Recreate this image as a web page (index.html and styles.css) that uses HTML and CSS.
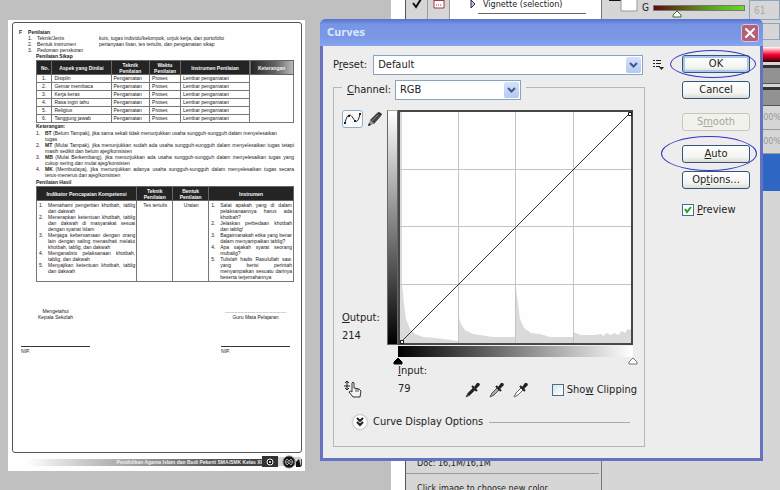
FILE: index.html
```html
<!DOCTYPE html>
<html lang="en">
<head>
<meta charset="utf-8">
<title>Curves</title>
<link rel="stylesheet" href="styles.css">
</head>
<body>
<div class="workspace">
  <main class="canvas">
    <article class="paper" lang="id">
      <div class="sheet">
        <h2 class="sheet-title"><span>F</span><span>Penilaian</span></h2>
        <dl class="facts">
          <dt>1.</dt><dd>Teknik/Jenis</dd><dd>kuis, tugas individu/kelompok, unjuk kerja, dan portofolio</dd>
          <dt>2.</dt><dd>Bentuk instrumen</dd><dd>pertanyaan lisan, tes tertulis, dan pengamatan sikap</dd>
          <dt>3.</dt><dd>Pedoman penskoran</dd><dd></dd>
        </dl>
        <div class="content">
          <h3>Penilaian Sikap</h3>
          <table class="attitude">
            <colgroup><col class="a1"><col class="a2"><col class="a3"><col class="a4"><col class="a5"><col class="a6"></colgroup>
            <thead><tr><th>No.</th><th>Aspek yang Dinilai</th><th>Teknik Penilaian</th><th>Waktu Penilaian</th><th>Instrumen Penilaian</th><th class="faded">Keterangan</th></tr></thead>
            <tbody>
              <tr><td>1.</td><td>Disiplin</td><td>Pengamatan</td><td>Proses</td><td>Lembar pengamatan</td><td></td></tr>
              <tr><td>2.</td><td>Gemar membaca</td><td>Pengamatan</td><td>Proses</td><td>Lembar pengamatan</td><td></td></tr>
              <tr><td>3.</td><td>Kerja keras</td><td>Pengamatan</td><td>Proses</td><td>Lembar pengamatan</td><td></td></tr>
              <tr><td>4.</td><td>Rasa ingin tahu</td><td>Pengamatan</td><td>Proses</td><td>Lembar pengamatan</td><td></td></tr>
              <tr><td>5.</td><td>Religius</td><td>Pengamatan</td><td>Proses</td><td>Lembar pengamatan</td><td></td></tr>
              <tr><td>6.</td><td>Tanggung jawab</td><td>Pengamatan</td><td>Proses</td><td>Lembar pengamatan</td><td></td></tr>
            </tbody>
          </table>
          <h3>Keterangan:</h3>
          <ol class="notes">
            <li><span><b>BT</b> (Belum Tampak), jika sama sekali tidak menunjukkan usaha sungguh-sungguh dalam menyelesaikan<br>tugas</span></li>
            <li><span><b>MT</b> (Mulai Tampak), jika menunjukkan sudah ada usaha sungguh-sungguh dalam menyelesaikan tugas tetapi masih sedikit dan belum ajeg/konsisten</span></li>
            <li><span><b>MB</b> (Mulai Berkembang), jika menunjukkan ada usaha sungguh-sungguh dalam menyelesaikan tugas yang cukup sering dan mulai ajeg/konsisten</span></li>
            <li><span><b>MK</b> (Membudaya), jika menunjukkan adanya usaha sungguh-sungguh dalam menyelesaikan tugas secara terus-menerus dan ajeg/konsisten</span></li>
          </ol>
          <h3>Penilaian Hasil</h3>
          <table class="results">
            <colgroup><col class="r1"><col class="r2"><col class="r3"><col class="r4"></colgroup>
            <thead><tr><th>Indikator Pencapaian Kompetensi</th><th>Teknik Penilaian</th><th>Bentuk Penilaian</th><th>Instrumen</th></tr></thead>
            <tbody><tr>
              <td><ol>
                <li>Memahami pengertian khotbah, tablig dan dakwah</li>
                <li>Menerapkan ketentuan khotbah, tablig dan dakwah di masyarakat sesuai dengan syariat Islam</li>
                <li>Menjaga kebersamaan dengan orang lain dengan saling menasihati melalui khotbah, tablig, dan dakwah</li>
                <li>Menganalisis pelaksanaan khotbah, tablig, dan dakwah</li>
                <li>Menyajikan ketentuan khotbah, tablig dan dakwah</li>
              </ol></td>
              <td class="mid">Tes tertulis</td>
              <td class="mid">Uraian</td>
              <td><ol>
                <li>Salat apakah yang di dalam pelaksanaannya harus ada khotbah?</li>
                <li>Jelaskan perbedaan khotbah dan tablig!</li>
                <li>Bagaimanakah etika yang benar dalam menyampaikan tablig?</li>
                <li>Apa sajakah syarat seorang mubalig?</li>
                <li>Tulislah hadis Rasulullah saw. yang berisi perintah menyampaikan sesuatu darinya beserta terjemahannya</li>
              </ol></td>
            </tr></tbody>
          </table>
        </div>
        <div class="signatures">
          <div class="signer"><p>Mengetahui<br>Kepala Sekolah</p><p class="nip">NIP.</p></div>
          <div class="signer"><p>............................................<br>Guru Mata Pelajaran</p><p class="nip">NIP.</p></div>
        </div>
      </div>
      <footer class="strip">
        <span>Pendidikan Agama Islam dan Budi Pekerti SMA/SMK Kelas XI</span>
        <svg width="40" height="14" viewBox="0 0 40 14" aria-hidden="true">
          <path d="M0 1h16v11H0z" fill="#333"/><path d="M16 2h23v9H16z" fill="#d5d5d5"/><path d="M34 12V7l3-3 2 8z" fill="#111"/>
          <circle cx="8" cy="7" r="3" fill="#111" stroke="#fff"/><circle cx="8" cy="7" r="1" fill="#fff"/>
          <circle cx="27" cy="7" r="6" fill="#161616" stroke="#777"/><path d="M23 7l2-3 2 2 2-2 2 3-2 3-2-2-2 2zM24 7h6" fill="none" stroke="#aaa"/>
        </svg>
      </footer>
    </article>
  </main>
  <section class="history">
    <div class="actions">
      <span class="cell"><svg width="14" height="12" viewBox="0 0 14 12" aria-hidden="true"><path d="M3 3l3 4 5-8" fill="none" stroke="#111" stroke-width="2"/></svg></span>
      <span class="cell"><svg width="14" height="12" viewBox="0 0 14 12" aria-hidden="true"><path d="M2-3h10V8H2z" fill="#fff" stroke="#a33642"/><path d="M2 0h10" stroke="#a33642" stroke-width="2"/><path d="M4 5h6" stroke="#a33642" stroke-dasharray="1 1"/></svg></span>
      <span class="action"><svg width="6" height="10" viewBox="0 0 6 10" aria-hidden="true"><path d="M1 0v8l4-4z" fill="#bcc" stroke="#226"/></svg><span>Vignette (selection)</span></span>
    </div>
    <div class="info">
      <p>Doc: 16,1M/16,1M</p>
      <p class="hint">Click image to choose new color.</p>
    </div>
  </section>
  <aside class="panels">
    <div class="color-row">
      <svg width="36" height="14" viewBox="0 0 36 14" aria-hidden="true"><path d="M7-9h18v10H7z" fill="#111"/><path d="M19-8h16v19H19z" fill="#fff" stroke="#999"/></svg>
      <label for="green">G</label>
      <span class="slider"><svg width="10" height="8" viewBox="0 0 10 8" aria-hidden="true"><path d="M5 1l4 4v2H1V5z" fill="#fff" stroke="#356b35"/></svg></span>
      <input id="green" class="number" type="text" value="61">
    </div>
    <input class="number blank" type="text" aria-label="B">
    <div class="spectrum"></div>
    <div class="tab"></div>
    <div class="tab"></div>
    <div class="percent">100%</div>
    <div class="percent">100%</div>
    <div class="layer"></div>
  </aside>
</div>

<section class="dialog" role="dialog" aria-labelledby="dialog-title">
  <header class="titlebar">
    <h1 id="dialog-title">Curves</h1>
    <button class="close" type="button" aria-label="Close"><svg width="18" height="18" viewBox="0 0 18 18" aria-hidden="true"><path d="M5 5l8 8M13 5l-8 8" stroke="#fff" stroke-width="2" stroke-linecap="round"/></svg></button>
  </header>
  <div class="body">
    <div class="settings">
      <div class="preset">
        <label for="preset">P<u>r</u>eset:</label>
        <span class="combo"><select id="preset"><option>Default</option></select><svg class="arrow" width="15" height="16" viewBox="0 0 15 16" aria-hidden="true"><path d="M4 6l3.500 3.500L11 6" fill="none" stroke="#435a85" stroke-width="2"/></svg></span>
        <button class="plain" type="button" aria-label="Preset options"><svg width="12" height="12" viewBox="0 0 12 12" aria-hidden="true"><path d="M1 1.500h2M1 4.500h2M1 7.500h2M4 1.500h5M4 4.500h5M4 7.500h4" stroke="#222"/><path d="M7 8h5l-2.500 3z" fill="#222"/></svg></button>
      </div>
      <div class="group">
        <div class="channel">
          <label for="channel"><u>C</u>hannel:</label>
          <span class="combo"><select id="channel"><option>RGB</option></select><svg class="arrow" width="15" height="16" viewBox="0 0 15 16" aria-hidden="true"><path d="M4 6l3.500 3.500L11 6" fill="none" stroke="#435a85" stroke-width="2"/></svg></span>
        </div>
        <div class="editor">
          <div class="side">
            <div class="tools">
              <button class="tool active" type="button" aria-label="Edit points"><svg width="19" height="16" viewBox="0 0 19 16" aria-hidden="true"><path d="M2 12C4 3 7 2 10 7s5 5 7-4" fill="none" stroke="#222"/><path d="M1 11h2v2H1zM5 4h2v2H5zM11 9h2v2h-2zM16 2h2v2h-2z" fill="#222"/></svg></button>
              <button class="tool" type="button" aria-label="Draw curve"><svg width="16" height="16" viewBox="0 0 16 16" aria-hidden="true"><path d="M1 15l2-6 4 4z" fill="#999"/><path d="M3 9l7-7 4 3-7 8z" fill="#444"/><path d="M10 2l2-1 3 2-1 2z" fill="#222"/><path d="M1 15l1-3 2 2z" fill="#111"/><path d="M5 10l6-6" stroke="#888"/></svg></button>
            </div>
            <div class="reading"><span><u>O</u>utput:</span><output>214</output></div>
          </div>
          <div class="ramp-y"></div>
          <svg class="graph" viewBox="0 0 235 235" role="img" aria-label="Curve">
            <path d="M0 0h235v235H0z" fill="#fefefe"/>
            <path d="M2 2h2v172l2 20 2 15 4 10 5 5 8 3 12 1 23 3V205l3 9 4 6 8 4 20 3h23v-48l2 15 2 15 4 9 7 5 9 1 10 3h23v-5l8 3 12 0 8-1 2 2 4-3 3 2 5-2 3 2 4-4 3 2 3-4 2 1 3-5V233H2z" fill="#dadada"/>
            <path d="M60.500 2v231M117.500 2v231M175.500 2v231M2 59.500h231M2 116.500h231M2 174.500h231" stroke="#c4c4c4" fill="none"/>
            <path d="M2 233L233 2" stroke="#333" fill="none"/>
            <path d="M1 1h233v233H1z" fill="none" stroke="#484848" stroke-width="2"/>
            <path d="M2.500 230.500h3v3h-3zM230.500 2.500h3v3h-3z" fill="#fff" stroke="#111"/>
          </svg>
          <div class="ramp-x"></div>
          <div class="stops">
            <svg width="10" height="8" viewBox="0 0 10 8" aria-hidden="true"><path d="M5 1l4 4v2H1V5z" fill="#000" stroke="#000"/></svg>
            <svg width="10" height="8" viewBox="0 0 10 8" aria-hidden="true"><path d="M5 1l4 4v2H1V5z" fill="#fff" stroke="#777"/></svg>
          </div>
          <button class="plain hand" type="button" aria-label="Adjust on image"><svg width="18" height="18" viewBox="0 0 18 18" aria-hidden="true"><path d="M3 1v9M1 3l2-2 2 2M0 6h6M1 8l2 2 2-2" fill="none" stroke="#222"/><path d="M8 12V3q1-2 2 0v5l5 1 2 2-1 6H9l-4-5q1-2 3 0" fill="#f4f4f4" stroke="#333"/><path d="M12 9v3M14 9v3" stroke="#555"/></svg></button>
          <div class="lower">
            <div class="reading"><span><u>I</u>nput:</span><output>79</output></div>
            <div class="droppers">
              <button class="plain" type="button" aria-label="Black point"><svg width="16" height="16" viewBox="0 0 16 16" aria-hidden="true"><path d="M1 15l2-4 5-5 2 2-5 5z" fill="#222" stroke="#555"/><path d="M7 4l5 5" stroke="#222" stroke-width="2"/><path d="M9 5l3-4 2 0 1 2-4 4z" fill="#222"/></svg></button>
              <button class="plain" type="button" aria-label="Gray point"><svg width="16" height="16" viewBox="0 0 16 16" aria-hidden="true"><path d="M1 15l2-4 5-5 2 2-5 5z" fill="#aaa" stroke="#555"/><path d="M7 4l5 5" stroke="#222" stroke-width="2"/><path d="M9 5l3-4 2 0 1 2-4 4z" fill="#222"/></svg></button>
              <button class="plain" type="button" aria-label="White point"><svg width="16" height="16" viewBox="0 0 16 16" aria-hidden="true"><path d="M1 15l2-4 5-5 2 2-5 5z" fill="#fff" stroke="#666"/><path d="M7 4l5 5" stroke="#222" stroke-width="2"/><path d="M9 5l3-4 2 0 1 2-4 4z" fill="#222"/></svg></button>
            </div>
            <label class="check"><input type="checkbox"><span>Sho<u>w</u> Clipping</span></label>
          </div>
        </div>
        <div class="more">
          <button class="expand" type="button" aria-label="Expand"><svg width="14" height="14" viewBox="0 0 14 14" aria-hidden="true"><path d="M4 3l3 3 3-3M4 7l3 3 3-3" fill="none" stroke="#222" stroke-width="2"/></svg></button>
          <span>Curve Display Options</span>
        </div>
      </div>
    </div>
    <div class="commands">
      <div class="marked ok"><button class="push default" type="button">OK</button></div>
      <button class="push" type="button">Cancel</button>
      <button class="push smooth" type="button" disabled>S<u>m</u>ooth</button>
      <div class="marked auto"><button class="push" type="button"><u>A</u>uto</button></div>
      <button class="push" type="button">Op<u>t</u>ions...</button>
      <label class="check preview"><input type="checkbox" checked><span><u>P</u>review</span></label>
    </div>
  </div>
</section>
</body>
</html>
```
FILE: styles.css
```css
* { box-sizing: border-box; }
body {
  margin: 0;
  min-height: 100vh;
  overflow: hidden;
  background: #c0c0c0;
  color: #222;
  font: 11px/16px "DejaVu Sans Condensed", "DejaVu Sans", sans-serif;
}
h1, h2, h3, p, dl, dd, ol { margin: 0; padding: 0; }
ol { list-style: none; }
svg { display: block; }
button, input, select { font: inherit; color: inherit; }

.workspace {
  display: grid;
  grid-template-columns: 391fr 211fr 178fr;
  height: 100vh;
}

/* Scanned page */
.canvas { padding: 20px 86px 0 8px; }
.paper {
  background: #fefefe;
  padding: 2px 3px 2px 4px;
  color: #222;
  font: 5px/6px "Liberation Sans", sans-serif;
}
.sheet {
  min-height: 431px;
  padding: 6px 7px 0 6px;
  border: 1px solid #555;
  border-radius: 3px;
}
.sheet-title { display: flex; gap: 6px; font-size: 5px; line-height: 6px; }
.facts { display: grid; grid-template-columns: 9px 62px 1fr; padding-left: 9px; }
.content { padding-left: 17px; }
h3 { font-size: 5px; line-height: 7px; }
table { width: 100%; table-layout: fixed; border-collapse: collapse; font-size: 5px; line-height: 6px; }
th { height: 14px; padding: 0 4px; background: #242424; color: #f4f4f4; border: 1px solid #666; }
td { padding: 0 2px; border: 1px solid #777; vertical-align: top; }
.attitude td { height: 8px; white-space: nowrap; }
.attitude td:first-child { text-align: center; }
.attitude tbody td:last-child { border-bottom-color: transparent; }
.attitude tbody tr:last-child td { border-bottom-color: #777; }
.faded { background: linear-gradient(90deg, #242424, #666 60%, #bbb); }
.a1 { width: 6%; } .a2 { width: 23%; } .a3 { width: 15%; } .a4 { width: 12%; } .a5 { width: 27%; } .a6 { width: 17%; }
.r1 { width: 39%; } .r2 { width: 14%; } .r3 { width: 14%; } .r4 { width: 33%; }
.results td { padding: 1px 1px 1px 2px; }
.results .mid { text-align: center; }
.content ol { counter-reset: n; }
.content li { display: grid; grid-template-columns: 9px 1fr; counter-increment: n; text-align: justify; }
.content li::before { content: counter(n) "."; }
.notes { padding-bottom: 1px; }
.signatures { display: flex; justify-content: space-between; padding: 26px 4px 0 2px; }
.signer { width: 69px; text-align: center; }
.nip { margin-top: 26px; border-top: 1px solid #333; padding-top: 1px; text-align: left; }
.strip {
  display: flex;
  align-items: center;
  justify-content: flex-end;
  margin: 2px 0 0 15px;
  background: linear-gradient(90deg, #fefefe, #ccc 20%, #888 50%, #444 75%) center / 100% 7px no-repeat;
  color: #eee;
  white-space: nowrap;
  font-weight: bold;
}

/* Panels behind the dialog */
.history { display: flex; flex-direction: column; justify-content: space-between; padding-left: 14px; background: #fff; border-right: 1px solid #777; }
.actions { display: flex; height: 20px; border-left: 1px solid #555; font-size: 9px; line-height: 8px; }
.cell { width: 22px; height: 20px; padding-left: 4px; background: #d6d6d6; border-right: 1px solid #999; }
.action { display: flex; gap: 2px; margin-left: 20px; white-space: nowrap; }
.action > span { width: 108px; height: 14px; padding-left: 5px; border-bottom: 1px solid #666; }
.info { height: 36px; border-left: 1px solid #555; background: #d6d6d6; font-size: 9px; white-space: nowrap; line-height: 18px; }
.info p { padding-left: 11px; }
.info .hint { margin: 1px 2px 0 0; border-top: 1px solid #999; line-height: 29px; }
.panels { background: #d6d6d6; overflow: hidden; }
.color-row { display: flex; gap: 4px; height: 19px; align-items: flex-start; font-size: 10px; }
.slider { flex: 1; height: 6px; margin-top: 5px; border: 1px solid #777; background: linear-gradient(90deg, #5c0d0d, #5c9d20 60%, #66da20); }
.slider svg { margin: 4px 0 0 18px; }
.number { width: 31px; height: 20px; padding: 0 4px; border: 1px solid #8ba5c0; background: #d6d6d6; color: #aaa; }
.blank { display: block; margin: 4px 0 7px auto; width: 28px; height: 17px; }
.spectrum { height: 15px; background: linear-gradient(#fff, #f03 50%, #300); }
.tab { height: 19px; margin-top: 3px; background: #929292; border-top: 3px solid #333; border-bottom: 1px solid #555; }
.percent { height: 23px; margin-top: 1px; padding-left: 156px; border-bottom: 1px solid #999; color: #999; font-size: 9px; line-height: 20px; }
.layer { height: 37px; background: #2f67c5; }

/* Curves dialog */
.dialog {
  position: absolute;
  top: 19px;
  left: 320px;
  right: 17px;
  background: #ededed;
  border: 3px solid #6572c2;
  border-top: 0;
  border-radius: 6px 6px 0 0;
}
.titlebar {
  display: flex;
  align-items: center;
  justify-content: space-between;
  height: 27px;
  margin: 0 -3px;
  padding: 0 4px 0 7px;
  border-radius: 6px 6px 0 0;
  background: linear-gradient(#5671cf, #7795e2 20%, #7b98e6 70%, #86a7f0);
}
.titlebar h1 { color: #d8e4ff; font-size: 11px; }
.close { width: 18px; height: 18px; padding: 0; border: 1px solid #dbc2d8; border-radius: 3px; background: #b2617a; }
.close svg { margin: -1px; }
.body { display: flex; gap: 18px; padding: 8px 10px 11px; }
.settings { flex: 1; min-width: 0; }
.commands { width: 68px; padding-top: 1px; }
.preset { display: flex; align-items: center; gap: 6px; height: 21px; }
.combo { position: relative; flex: 1; height: 20px; }
.combo select { display: block; width: 100%; height: 20px; padding: 0 4px; border: 1px solid #86a3bf; border-radius: 0; background: #fff; appearance: none; }
.arrow { position: absolute; top: 2px; right: 2px; background: linear-gradient(#d5e1fc, #b5c8f5); border-radius: 2px; pointer-events: none; }
.preset .combo { margin-right: 3px; }
.plain { padding: 0; border: 0; background: none; }
.group { margin: 12px 19px 0 0; padding: 0 11px 16px 8px; border: 1px solid #b9b9a9; }
.channel { display: flex; align-items: center; gap: 4px; width: 184px; height: 20px; margin: -8px 0 10px; padding: 0 5px; background: #ededed; }
.editor { display: grid; grid-template-columns: 45px 11px 1fr; }
.side { display: flex; flex-direction: column; justify-content: space-between; }
.tools { display: flex; gap: 4px; }
.tool { width: 16px; height: 18px; padding: 0; border: 0; background: none; }
.tool.active { width: 21px; border: 1px solid #8fb0cb; border-radius: 3px; background: #fbfbfb; }
.reading { display: grid; line-height: 18px; }
.ramp-y { border: 1px solid #666; border-top-color: #aaa; background: linear-gradient(#fff, #000); }
.graph { width: 100%; height: auto; }
.ramp-x { grid-column: 3; height: 11px; margin-top: 1px; background: linear-gradient(90deg, #000, #fff); }
.stops { grid-column: 3; display: flex; justify-content: space-between; margin: 0 -5px; }
.hand { grid-column: 1 / 3; align-self: end; width: 18px; margin-left: 2px; }
.lower { display: flex; align-items: flex-end; justify-content: space-between; margin: -3px -4px 0 0; }
.droppers { display: flex; gap: 8px; margin-left: 16px; }
.check { display: flex; align-items: center; gap: 3px; white-space: nowrap; }
.check input { width: 12px; height: 12px; margin: 0; appearance: none; border: 1px solid #43708f; background: linear-gradient(135deg, #dce4e8, #fff); }
.check input:checked { background: #fff url("data:image/svg+xml,%3Csvg xmlns='http://www.w3.org/2000/svg' viewBox='0 0 10 10'%3E%3Cpath d='M2 4l2 3 4-5' fill='none' stroke='%2321a121' stroke-width='2'/%3E%3C/svg%3E"); }
.more { display: flex; align-items: center; gap: 6px; margin: 16px 3px 0 11px; }
.more::after { content: ""; flex: 1; border-top: 1px solid #aaa; }
.expand { width: 14px; height: 14px; padding: 0; border: 0; border-radius: 50%; background: #fff; box-shadow: 0 0 2px #777; }
.push { display: block; width: 100%; height: 18px; padding: 0; margin-bottom: 8px; border: 1px solid #2e5878; border-radius: 3px; background: linear-gradient(#fff, #f4f4f0 70%, #dcdcd4); line-height: 14px; }
.push.default { box-shadow: inset 0 0 0 2px #a9c5f0; }
.push.smooth { margin: 14px 0; border-color: #c9c7ba; background: #f2f2ec; color: #a7a798; }
.marked { position: relative; }
.marked::after { content: ""; position: absolute; border: 1px solid #3434c8; border-radius: 50%; pointer-events: none; }
.ok::after { inset: -5px -6px -5px -12px; }
.auto::after { inset: -9px -7px -8px -21px; }
.preview { margin-top: 13px; }
```
